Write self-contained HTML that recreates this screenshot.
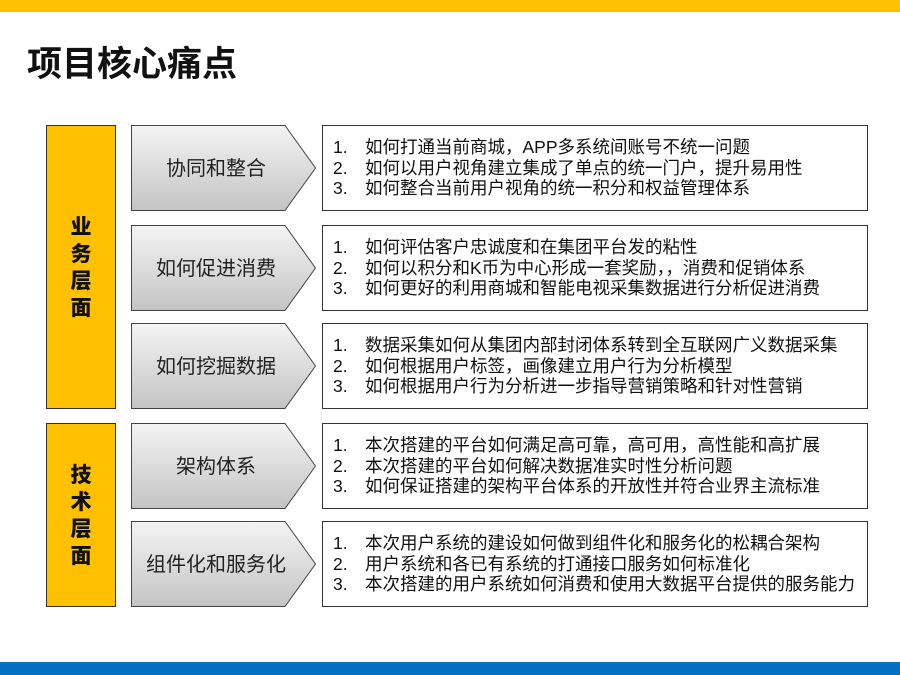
<!DOCTYPE html>
<html><head><meta charset="utf-8"><style>
body{margin:0;width:900px;height:675px;position:relative;background:#fff;overflow:hidden;font-family:"Liberation Sans","Noto Sans CJK SC",sans-serif;}
.top{position:absolute;left:0;top:0;width:900px;height:12px;background:#FFC000;}
.bot{position:absolute;left:0;top:662px;width:900px;height:13px;background:#0070C0;}
h1{position:absolute;left:27px;top:36px;margin:0;font-size:35px;font-weight:bold;color:#111;font-family:"Noto Sans CJK SC",sans-serif;}
.yb{position:absolute;left:46px;width:70px;background:#FFC000;border:1px solid #333;box-sizing:border-box;display:flex;align-items:center;justify-content:center;}
.yb div{font-family:"Noto Sans CJK SC",sans-serif;font-weight:900;font-size:21px;line-height:27px;width:22px;text-align:center;color:#111;}
svg.ar{position:absolute;left:131px;}
.lab{position:absolute;left:131px;width:170px;text-align:center;font-size:20px;color:#222;font-family:"Noto Sans CJK SC",sans-serif;}
.tb{position:absolute;left:322px;width:546px;border:1px solid #333;box-sizing:border-box;background:#fff;padding-left:10px;display:flex;flex-direction:column;justify-content:center;font-size:17.5px;line-height:20.5px;color:#111;}
.tb p{margin:0;white-space:nowrap;}
.tb b{font-weight:normal;display:inline-block;width:32px;}
</style></head><body>
<div class="top"></div>
<h1>项目核心痛点</h1>
<div class="yb" style="top:125px;height:284px"><div>业务层面</div></div>
<div class="yb" style="top:423px;height:184px"><div>技术层面</div></div>

<svg width="0" height="0" style="position:absolute"><defs><linearGradient id="g" x1="0" y1="0" x2="0" y2="1"><stop offset="0" stop-color="#f4f4f4"/><stop offset="1" stop-color="#c4c4c4"/></linearGradient></defs></svg>

<svg class="ar" style="top:125px" width="186" height="86"><polygon points="0.5,0.5 154,0.5 184.5,43 154,85.5 0.5,85.5" fill="url(#g)" stroke="#444"/></svg>
<svg class="ar" style="top:225px" width="186" height="86"><polygon points="0.5,0.5 154,0.5 184.5,43 154,85.5 0.5,85.5" fill="url(#g)" stroke="#444"/></svg>
<svg class="ar" style="top:323px" width="186" height="86"><polygon points="0.5,0.5 154,0.5 184.5,43 154,85.5 0.5,85.5" fill="url(#g)" stroke="#444"/></svg>
<svg class="ar" style="top:423px" width="186" height="86"><polygon points="0.5,0.5 154,0.5 184.5,43 154,85.5 0.5,85.5" fill="url(#g)" stroke="#444"/></svg>
<svg class="ar" style="top:521px" width="186" height="86"><polygon points="0.5,0.5 154,0.5 184.5,43 154,85.5 0.5,85.5" fill="url(#g)" stroke="#444"/></svg>

<div class="lab" style="top:152px">协同和整合</div>
<div class="lab" style="top:252px">如何促进消费</div>
<div class="lab" style="top:350px">如何挖掘数据</div>
<div class="lab" style="top:450px">架构体系</div>
<div class="lab" style="top:548px;left:128px;width:176px">组件化和服务化</div>

<div class="tb" style="top:125px;height:86px"><p><b>1.</b>如何打通当前商城，APP多系统间账号不统一问题</p><p><b>2.</b>如何以用户视角建立集成了单点的统一门户，提升易用性</p><p><b>3.</b>如何整合当前用户视角的统一积分和权益管理体系</p></div>
<div class="tb" style="top:225px;height:86px"><p><b>1.</b>如何评估客户忠诚度和在集团平台发的粘性</p><p><b>2.</b>如何以积分和K币为中心形成一套奖励，，消费和促销体系</p><p><b>3.</b>如何更好的利用商城和智能电视采集数据进行分析促进消费</p></div>
<div class="tb" style="top:323px;height:86px"><p><b>1.</b>数据采集如何从集团内部封闭体系转到全互联网广义数据采集</p><p><b>2.</b>如何根据用户标签，画像建立用户行为分析模型</p><p><b>3.</b>如何根据用户行为分析进一步指导营销策略和针对性营销</p></div>
<div class="tb" style="top:423px;height:86px"><p><b>1.</b>本次搭建的平台如何满足高可靠，高可用，高性能和高扩展</p><p><b>2.</b>本次搭建的平台如何解决数据准实时性分析问题</p><p><b>3.</b>如何保证搭建的架构平台体系的开放性并符合业界主流标准</p></div>
<div class="tb" style="top:521px;height:86px"><p><b>1.</b>本次用户系统的建设如何做到组件化和服务化的松耦合架构</p><p><b>2.</b>用户系统和各已有系统的打通接口服务如何标准化</p><p><b>3.</b>本次搭建的用户系统如何消费和使用大数据平台提供的服务能力</p></div>
<div class="bot"></div>
</body></html>
